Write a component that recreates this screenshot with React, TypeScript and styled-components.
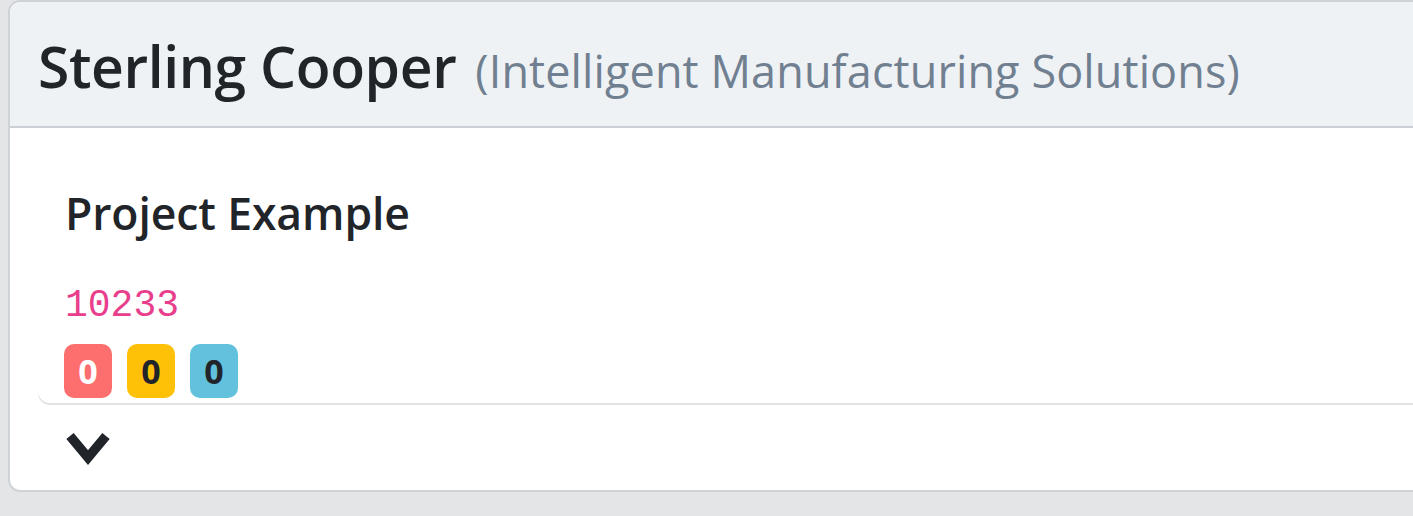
import React from "react";
import styled, { createGlobalStyle } from "styled-components";

const GlobalStyle = createGlobalStyle`
  html, body {
    margin: 0;
    padding: 0;
    background: #e4e5e7;
    overflow: hidden;
  }
  body {
    font-family: "Open Sans", "Noto Sans", sans-serif;
    color: #212529;
  }
`;

const Page = styled.div`
  padding-left: 8px;
  width: 1500px;
`;

const Card = styled.section`
  width: 1460px;
  background: #ffffff;
  border: 2px solid #cfd3d8;
  border-radius: 12px;
  overflow: hidden;
`;

const Header = styled.header`
  height: 124px;
  box-sizing: content-box;
  background: #eef2f5;
  border-bottom: 2px solid #cbd0d6;
  padding: 0 0 0 28px;
`;

const Title = styled.h1`
  margin: 0;
  padding-top: 28px;
  font-size: 57px;
  line-height: 72px;
  font-weight: 600;
  letter-spacing: -0.4px;
  color: #212529;
  white-space: nowrap;
`;

const Subtitle = styled.span`
  font-size: 45px;
  font-weight: 400;
  letter-spacing: 0.1px;
  color: #718090;
  margin-left: 19px;
`;

const Body = styled.div`
  padding-left: 28px;
`;

const Project = styled.div`
  height: 275px;
  box-sizing: border-box;
  padding: 56px 0 0 27px;
  background: #ffffff;
  border-bottom-left-radius: 12px;
  box-shadow: 0 2px 0 #e1e2e3;
`;

const ProjectName = styled.h2`
  margin: 0;
  font-size: 44.5px;
  line-height: 58px;
  font-weight: 600;
  letter-spacing: -0.1px;
  color: #212529;
`;

const Code = styled.code`
  display: block;
  margin-top: 45px;
  font-family: "Liberation Mono", "DejaVu Sans Mono", monospace;
  font-size: 38px;
  line-height: 38px;
  color: #e83e8c;
`;

const Badges = styled.div`
  display: flex;
  gap: 15px;
  margin-top: 19px;
  margin-left: -1px;
`;

const Badge = styled.span<{ $bg: string; $fg: string }>`
  display: inline-flex;
  align-items: center;
  justify-content: center;
  width: 48px;
  height: 54px;
  border-radius: 10px;
  background: ${(p) => p.$bg};
  color: ${(p) => p.$fg};
  font-size: 34px;
  font-weight: 700;
`;

const Footer = styled.div`
  height: 87px;
  box-sizing: border-box;
  padding: 29px 0 0 28px;
`;

const Toggle = styled.button`
  display: block;
  padding: 0;
  border: 0;
  background: transparent;
  cursor: pointer;
  width: 44px;
  height: 34px;
  color: #212529;
`;

const Chevron = () => (
  <svg width="44" height="34" viewBox="0 0 44 34" aria-hidden="true">
    <polyline
      points="4,4 22,25.5 40,4"
      fill="none"
      stroke="currentColor"
      strokeWidth="9.5"
      strokeLinejoin="miter"
      strokeLinecap="butt"
    />
  </svg>
);

export default function App() {
  return (
    <>
      <GlobalStyle />
      <Page>
        <Card>
          <Header>
            <Title>
              Sterling Cooper
              <Subtitle>(Intelligent Manufacturing Solutions)</Subtitle>
            </Title>
          </Header>
          <Body>
            <Project>
              <ProjectName>Project Example</ProjectName>
              <Code>10233</Code>
              <Badges>
                <Badge $bg="#fd6f6f" $fg="#ffffff">0</Badge>
                <Badge $bg="#ffc107" $fg="#212529">0</Badge>
                <Badge $bg="#62c2de" $fg="#212529">0</Badge>
              </Badges>
            </Project>
            <Footer>
              <Toggle aria-label="Expand">
                <Chevron />
              </Toggle>
            </Footer>
          </Body>
        </Card>
      </Page>
    </>
  );
}
